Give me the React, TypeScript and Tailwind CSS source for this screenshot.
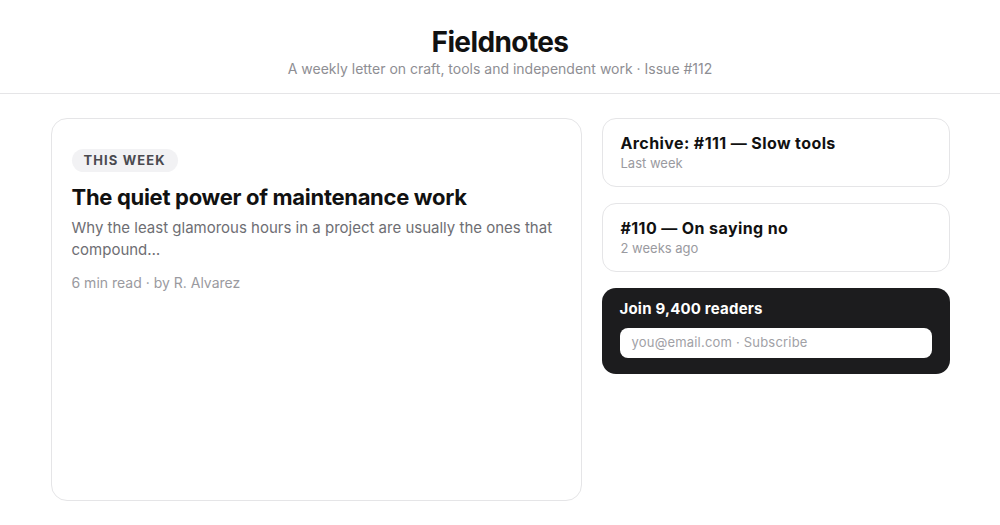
import React from "react";

export default function App() {
  return (
    <div
      className="h-screen flex flex-col bg-white text-[#111111]"
      style={{ fontFamily: "Inter, 'Noto Sans', sans-serif" }}
    >
      <header className="pt-[25px] pb-[14px] border-b border-[#e5e5e7] text-center">
        <h1 className="text-[28px] leading-[34px] font-bold tracking-[-0.6px]">Fieldnotes</h1>
        <p className="text-[14px] leading-5 text-[#8e8e93]">
          A weekly letter on craft, tools and independent work · Issue #112
        </p>
      </header>
      <main className="flex-1 py-6">
        <div className="mx-auto w-[899px] h-full grid grid-cols-[531px_1fr] gap-5">
          <article className="border border-[#e5e5e7] rounded-2xl px-5 pt-7">
            <span className="inline-block bg-[#f2f2f4] text-[#4a4a4f] text-[13px] leading-[23px] font-bold tracking-[1.1px] px-3 rounded-full">
              THIS WEEK
            </span>
            <h2 className="mt-[11px] text-[22px] leading-7 font-bold tracking-[-0.3px]">
              The quiet power of maintenance work
            </h2>
            <p className="mt-1.5 text-[15px] leading-[22px] text-[#6e6e73]">
              Why the least glamorous hours in a project are usually the ones that compound…
            </p>
            <p className="mt-3 text-[14px] leading-5 text-[#9a9aa0]">6 min read · by R. Alvarez</p>
          </article>
          <aside className="flex flex-col gap-4 items-stretch">
            <div className="border border-[#e5e5e7] rounded-[14px] px-[18px] py-[14px]">
              <div className="text-[16px] leading-5 font-bold tracking-[0.4px]">Archive: #111 — Slow tools</div>
              <div className="text-[13px] leading-[18px] text-[#9a9aa0] mt-[1px]">Last week</div>
            </div>
            <div className="border border-[#e5e5e7] rounded-[14px] px-[18px] py-[14px]">
              <div className="text-[16px] leading-5 font-bold tracking-[0.4px]">#110 — On saying no</div>
              <div className="text-[13px] leading-[18px] text-[#9a9aa0] mt-[1px]">2 weeks ago</div>
            </div>
            <div className="bg-[#1c1c1e] rounded-[14px] px-[18px] pt-[11px] pb-4">
              <div className="text-[15px] leading-5 font-bold text-white tracking-[0.2px]">Join 9,400 readers</div>
              <div className="mt-[9px] bg-white rounded-lg h-[30px] flex items-center px-3 text-[13px] text-[#a1a1a6] tracking-[0.2px]">
                you@email.com · Subscribe
              </div>
            </div>
          </aside>
        </div>
      </main>
    </div>
  );
}
